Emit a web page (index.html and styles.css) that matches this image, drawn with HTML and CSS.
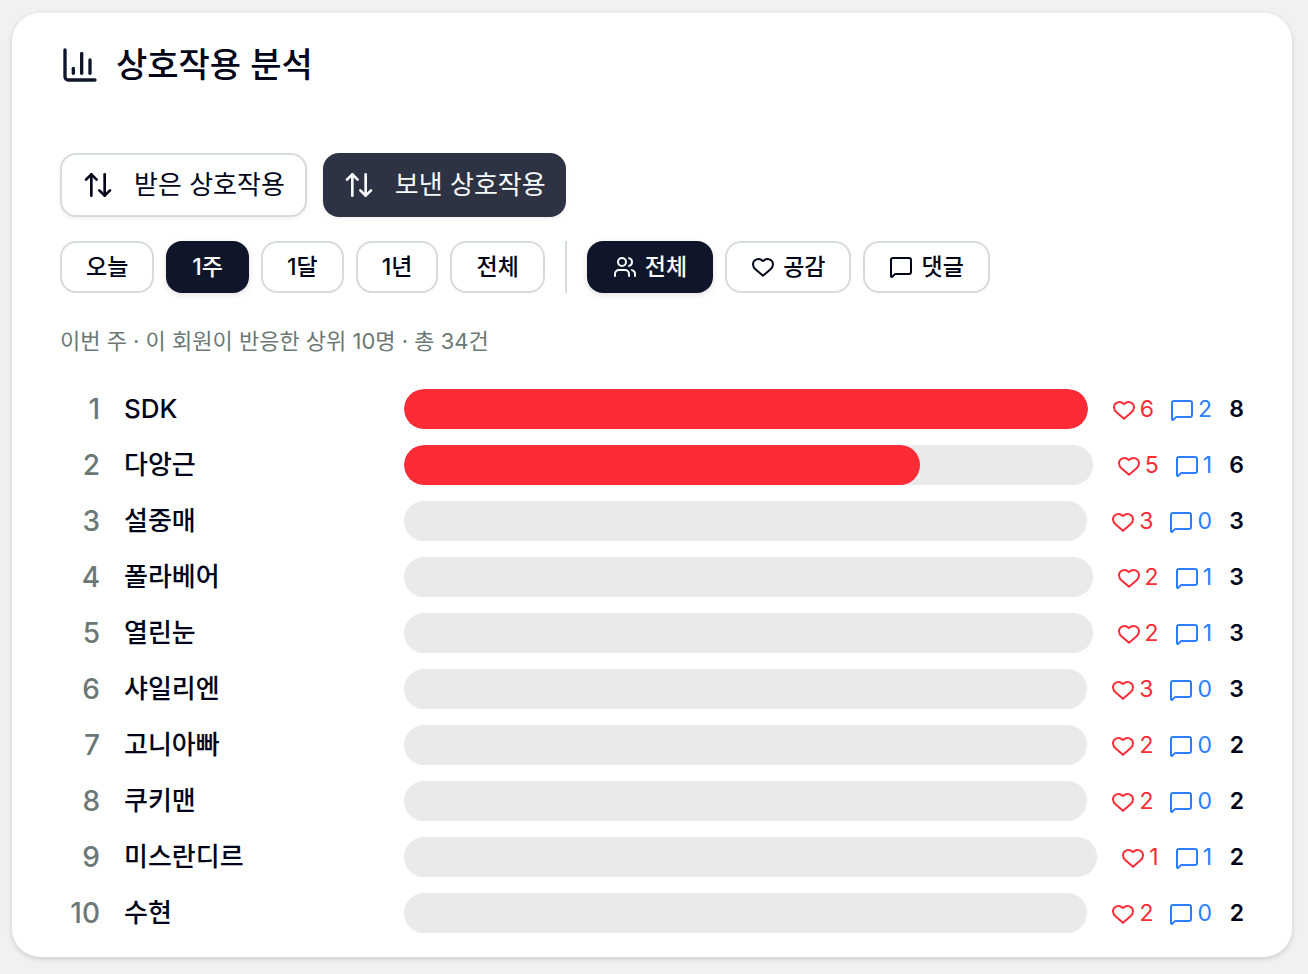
FILE: index.html
```html
<!DOCTYPE html>
<html lang="ko">
<head>
    <meta charset="UTF-8">
    <meta name="viewport" content="width=device-width, initial-scale=1.0">
    <title>상호작용 분석</title>
    <link rel="stylesheet" href="styles.css">
</head>
<body>
    <!-- Shared icons -->
    <svg class="sprite" aria-hidden="true">
        <symbol id="icon-chart" viewBox="0 0 24 24"><path d="M3 3v16a2 2 0 0 0 2 2h16"/><path d="M18 17V9"/><path d="M13 17V5"/><path d="M8 17v-3"/></symbol>
        <symbol id="icon-arrows" viewBox="0 0 24 24"><path d="m21 16-4 4-4-4"/><path d="M17 20V4"/><path d="m3 8 4-4 4 4"/><path d="M7 4v16"/></symbol>
        <symbol id="icon-users" viewBox="0 0 24 24"><path d="M16 21v-2a4 4 0 0 0-4-4H6a4 4 0 0 0-4 4v2"/><circle cx="9" cy="7" r="4"/><path d="M22 21v-2a4 4 0 0 0-3-3.87"/><path d="M16 3.13a4 4 0 0 1 0 7.75"/></symbol>
        <symbol id="icon-heart" viewBox="0 0 24 24"><path d="M2 9.5a5.5 5.5 0 0 1 9.591-3.676.56.56 0 0 0 .818 0A5.49 5.49 0 0 1 22 9.5c0 2.29-1.5 4-3 5.3l-7 6-7-6c-1.5-1.3-3-3-3-5.3"/></symbol>
        <symbol id="icon-comment" viewBox="0 0 24 24"><path d="M22 17a2 2 0 0 1-2 2H6.828a2 2 0 0 0-1.414.586l-2.202 2.202A.71.71 0 0 1 2 21.286V5a2 2 0 0 1 2-2h16a2 2 0 0 1 2 2z"/></symbol>
    </svg>

    <main class="card">
        <h1 class="title">
            <svg class="icon icon-lg"><use href="#icon-chart"/></svg>
            상호작용 분석
        </h1>

        <!-- Direction -->
        <div class="tabs">
            <button type="button" class="tab"><svg class="icon icon-md"><use href="#icon-arrows"/></svg>받은 상호작용</button>
            <button type="button" class="tab active" aria-pressed="true"><svg class="icon icon-md"><use href="#icon-arrows"/></svg>보낸 상호작용</button>
        </div>

        <!-- Period and type -->
        <div class="filters">
            <button type="button" class="pill">오늘</button>
            <button type="button" class="pill active" aria-pressed="true">1주</button>
            <button type="button" class="pill">1달</button>
            <button type="button" class="pill">1년</button>
            <button type="button" class="pill">전체</button>
            <span class="divider"></span>
            <button type="button" class="pill active" aria-pressed="true"><svg class="icon"><use href="#icon-users"/></svg>전체</button>
            <button type="button" class="pill"><svg class="icon"><use href="#icon-heart"/></svg>공감</button>
            <button type="button" class="pill"><svg class="icon"><use href="#icon-comment"/></svg>댓글</button>
        </div>

        <p class="summary">이번 주 · 이 회원이 반응한 상위 10명 · 총 34건</p>

        <!-- Ranking -->
        <ol class="ranking">
            <li class="row">
                <span class="rank">1</span>
                <span class="name">SDK</span>
                <div class="track"><div class="fill" style="width: 100%"></div></div>
                <div class="stats">
                    <span class="stat likes"><svg class="icon"><use href="#icon-heart"/></svg>6</span>
                    <span class="stat comments"><svg class="icon"><use href="#icon-comment"/></svg>2</span>
                    <span class="total">8</span>
                </div>
            </li>
            <li class="row">
                <span class="rank">2</span>
                <span class="name">다앙근</span>
                <div class="track"><div class="fill" style="width: 75%"></div></div>
                <div class="stats">
                    <span class="stat likes"><svg class="icon"><use href="#icon-heart"/></svg>5</span>
                    <span class="stat comments"><svg class="icon"><use href="#icon-comment"/></svg>1</span>
                    <span class="total">6</span>
                </div>
            </li>
            <li class="row">
                <span class="rank">3</span>
                <span class="name">설중매</span>
                <div class="track"></div>
                <div class="stats">
                    <span class="stat likes"><svg class="icon"><use href="#icon-heart"/></svg>3</span>
                    <span class="stat comments"><svg class="icon"><use href="#icon-comment"/></svg>0</span>
                    <span class="total">3</span>
                </div>
            </li>
            <li class="row">
                <span class="rank">4</span>
                <span class="name">폴라베어</span>
                <div class="track"></div>
                <div class="stats">
                    <span class="stat likes"><svg class="icon"><use href="#icon-heart"/></svg>2</span>
                    <span class="stat comments"><svg class="icon"><use href="#icon-comment"/></svg>1</span>
                    <span class="total">3</span>
                </div>
            </li>
            <li class="row">
                <span class="rank">5</span>
                <span class="name">열린눈</span>
                <div class="track"></div>
                <div class="stats">
                    <span class="stat likes"><svg class="icon"><use href="#icon-heart"/></svg>2</span>
                    <span class="stat comments"><svg class="icon"><use href="#icon-comment"/></svg>1</span>
                    <span class="total">3</span>
                </div>
            </li>
            <li class="row">
                <span class="rank">6</span>
                <span class="name">샤일리엔</span>
                <div class="track"></div>
                <div class="stats">
                    <span class="stat likes"><svg class="icon"><use href="#icon-heart"/></svg>3</span>
                    <span class="stat comments"><svg class="icon"><use href="#icon-comment"/></svg>0</span>
                    <span class="total">3</span>
                </div>
            </li>
            <li class="row">
                <span class="rank">7</span>
                <span class="name">고니아빠</span>
                <div class="track"></div>
                <div class="stats">
                    <span class="stat likes"><svg class="icon"><use href="#icon-heart"/></svg>2</span>
                    <span class="stat comments"><svg class="icon"><use href="#icon-comment"/></svg>0</span>
                    <span class="total">2</span>
                </div>
            </li>
            <li class="row">
                <span class="rank">8</span>
                <span class="name">쿠키맨</span>
                <div class="track"></div>
                <div class="stats">
                    <span class="stat likes"><svg class="icon"><use href="#icon-heart"/></svg>2</span>
                    <span class="stat comments"><svg class="icon"><use href="#icon-comment"/></svg>0</span>
                    <span class="total">2</span>
                </div>
            </li>
            <li class="row">
                <span class="rank">9</span>
                <span class="name">미스란디르</span>
                <div class="track"></div>
                <div class="stats">
                    <span class="stat likes"><svg class="icon"><use href="#icon-heart"/></svg>1</span>
                    <span class="stat comments"><svg class="icon"><use href="#icon-comment"/></svg>1</span>
                    <span class="total">2</span>
                </div>
            </li>
            <li class="row">
                <span class="rank">10</span>
                <span class="name">수현</span>
                <div class="track"></div>
                <div class="stats">
                    <span class="stat likes"><svg class="icon"><use href="#icon-heart"/></svg>2</span>
                    <span class="stat comments"><svg class="icon"><use href="#icon-comment"/></svg>0</span>
                    <span class="total">2</span>
                </div>
            </li>
        </ol>
    </main>
</body>
</html>
```
FILE: styles.css
```css
:root {
    --page: #f0f2f1;
    --text: #020618;
    --dark: #10162a;
    --slate: #2d3343;
    --muted: #6b7875;
    --border: #d6dcda;
    --track: #e9eaeb;
    --red: #fd2b36;
    --blue: #2b7fff;
}

* {
    margin: 0;
    padding: 0;
    box-sizing: border-box;
}

body {
    background: var(--page);
    color: var(--text);
    font-family: Inter, 'Noto Sans CJK KR', sans-serif;
    font-size: 22px;
    padding: 13px 16px 17px 12px;
}

.sprite {
    position: absolute;
    width: 0;
    height: 0;
}

.icon {
    width: 24px;
    height: 24px;
    flex-shrink: 0;
    fill: none;
    stroke: currentColor;
    stroke-width: 2;
    stroke-linecap: round;
    stroke-linejoin: round;
}

.icon-md {
    width: 32px;
    height: 32px;
}

.icon-lg {
    width: 40px;
    height: 40px;
    color: var(--dark);
}

.card {
    background: #fff;
    border-radius: 28px;
    padding: 32px 48px 24px;
    box-shadow: 0 2px 6px rgba(0, 0, 0, 0.1), 0 2px 4px rgba(0, 0, 0, 0.06);
}

.title {
    display: flex;
    align-items: center;
    gap: 16px;
    font-size: 34px;
    font-weight: 500;
    line-height: 40px;
    margin-bottom: 68px;
}

button {
    display: flex;
    align-items: center;
    background: #fff;
    color: var(--text);
    border: 2px solid var(--border);
    border-radius: 16px;
    font-family: inherit;
    line-height: 32px;
    cursor: pointer;
}

/* Direction tabs */
.tabs {
    display: flex;
    flex-wrap: wrap;
    gap: 16px;
    margin-bottom: 24px;
}

.tab {
    gap: 20px;
    height: 64px;
    padding: 0 20px;
    font-size: 26px;
    box-shadow: 0 2px 4px rgba(0, 0, 0, 0.06);
}

.tab.active {
    background: var(--slate);
    color: #f8fafc;
    border: none;
}

/* Period and type filters */
.filters {
    display: flex;
    flex-wrap: wrap;
    gap: 12px;
    margin-bottom: 32px;
}

.pill {
    gap: 8px;
    height: 52px;
    padding: 0 24px;
    font-size: 23px;
    font-weight: 500;
}

.pill.active {
    background: var(--dark);
    border-color: var(--dark);
    color: #f8fafc;
    box-shadow: 0 2px 6px rgba(0, 0, 0, 0.12);
}

.divider {
    width: 2px;
    margin: 0 8px;
    background: var(--border);
}

.summary {
    color: var(--muted);
    line-height: 32px;
    margin-bottom: 32px;
}

/* Ranking rows */
.ranking {
    display: flex;
    flex-direction: column;
    gap: 16px;
    list-style: none;
}

.row {
    display: flex;
    align-items: center;
    gap: 24px;
    height: 40px;
}

.rank {
    width: 40px;
    color: var(--muted);
    font-size: 28px;
    font-weight: 500;
    line-height: 40px;
    text-align: right;
}

.name {
    width: 256px;
    font-size: 26px;
    font-weight: 500;
    line-height: 40px;
}

.track {
    flex: 1;
    height: 40px;
    border-radius: 20px;
    background: var(--track);
    overflow: hidden;
}

.fill {
    height: 100%;
    border-radius: 20px;
    background: var(--red);
}

.stats {
    display: flex;
    align-items: center;
    gap: 16px;
    font-size: 23px;
    line-height: 26px;
}

.stat {
    display: flex;
    align-items: flex-end;
    gap: 4px;
}

.likes {
    color: var(--red);
}

.comments {
    color: var(--blue);
}

.total {
    min-width: 16px;
    font-weight: 600;
    text-align: right;
}
```
